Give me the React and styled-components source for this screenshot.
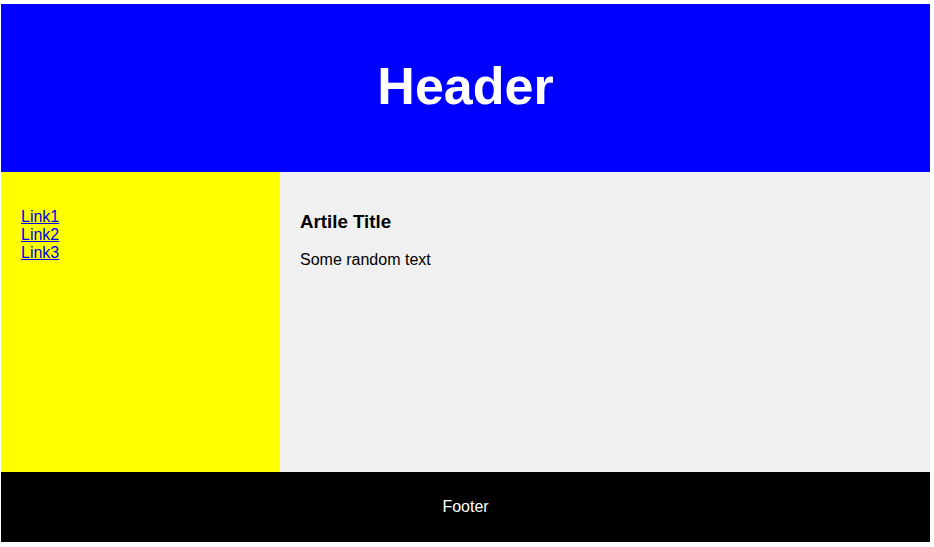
import React from "react";
import styled, { createGlobalStyle } from "styled-components";

const Global = createGlobalStyle`
  html, body { margin: 0; padding: 0; background: #fff; }
  body { padding: 4px 4px 5px 1px; font-family: "Liberation Sans", Arial, sans-serif; }
`;

const Page = styled.div`
  display: grid;
  grid-template-columns: 279px 1fr;
  grid-template-rows: 168px 300px 70px;
  width: 929px;
`;

const Header = styled.header`
  grid-column: 1 / -1;
  background: #0000ff;
  color: #fff;
  display: flex;
  align-items: center;
  justify-content: center;
`;

const HeaderTitle = styled.h1`
  margin: 0;
  font-size: 52px;
  font-weight: bold;
  transform: translateY(-2px);
`;

const Sidebar = styled.nav`
  background: #ffff00;
  padding: 36px 20px 20px 20px;
  box-sizing: border-box;
`;

const LinkList = styled.div`
  display: flex;
  flex-direction: column;
`;

const NavLink = styled.a`
  color: #0000ee;
  font-size: 16px;
  line-height: 18px;
  text-decoration: underline;
`;

const Main = styled.main`
  background: #f0f0f0;
  padding: 21px 20px 20px;
  box-sizing: border-box;
`;

const Title = styled.h3`
  margin: 18px 0;
  font-size: 18.72px;
  font-weight: bold;
  color: #000;
`;

const Text = styled.p`
  margin: 0;
  font-size: 16px;
  color: #000;
`;

const Footer = styled.footer`
  grid-column: 1 / -1;
  background: #000;
  color: #fff;
  display: flex;
  align-items: center;
  justify-content: center;
  font-size: 16px;
`;

export default function App() {
  return (
    <>
      <Global />
      <Page>
        <Header>
          <HeaderTitle>Header</HeaderTitle>
        </Header>
        <Sidebar>
          <LinkList>
            <NavLink href="#">Link1</NavLink>
            <NavLink href="#">Link2</NavLink>
            <NavLink href="#">Link3</NavLink>
          </LinkList>
        </Sidebar>
        <Main>
          <Title>Artile Title</Title>
          <Text>Some random text</Text>
        </Main>
        <Footer>Footer</Footer>
      </Page>
    </>
  );
}
